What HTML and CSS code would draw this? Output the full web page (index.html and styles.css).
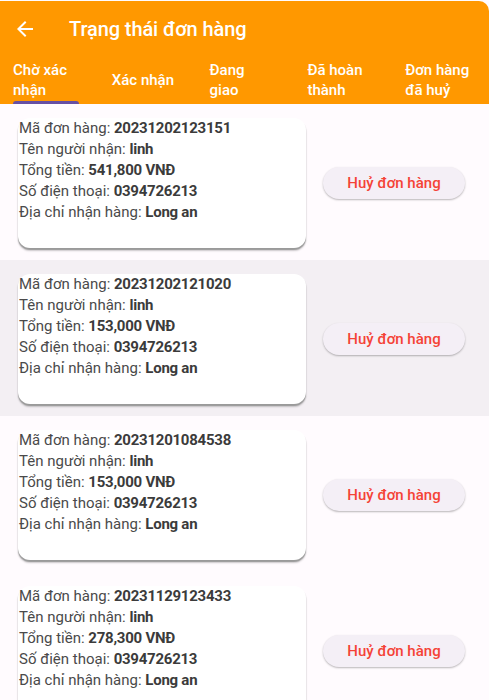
FILE: index.html
```html
<!DOCTYPE html>
<html lang="vi">
<head>
<meta charset="utf-8">
<title>Trạng thái đơn hàng</title>
<link rel="stylesheet" href="styles.css">
</head>
<body>
<header class="header">
  <div class="appbar">
    <span class="back">
      <svg width="24" height="24" viewBox="0 0 24 24"><path fill="#fff" d="M20 11H7.830l5.590-5.590L12 4l-8 8 8 8 1.410-1.410L7.830 13H20v-2z"/></svg>
    </span>
    <h1 class="title">Trạng thái đơn hàng</h1>
  </div>
  <nav class="tabs">
    <div class="tab active"><span class="label">Chờ xác<br>nhận</span></div>
    <div class="tab"><span class="label">Xác nhận</span></div>
    <div class="tab"><span class="label">Đang<br>giao</span></div>
    <div class="tab"><span class="label">Đã hoàn<br>thành</span></div>
    <div class="tab"><span class="label">Đơn hàng<br>đã huỷ</span></div>
  </nav>
</header>
<main class="list">
  <section class="order">
    <div class="card">
      <div class="line">Mã đơn hàng: <b>20231202123151</b></div>
      <div class="line">Tên người nhận: <b>linh</b></div>
      <div class="line">Tổng tiền: <b>541,800 VNĐ</b></div>
      <div class="line">Số điện thoại: <b>0394726213</b></div>
      <div class="line">Địa chỉ nhận hàng: <b>Long an</b></div>
    </div>
    <button class="cancel">Huỷ đơn hàng</button>
  </section>
  <section class="order alt">
    <div class="card">
      <div class="line">Mã đơn hàng: <b>20231202121020</b></div>
      <div class="line">Tên người nhận: <b>linh</b></div>
      <div class="line">Tổng tiền: <b>153,000 VNĐ</b></div>
      <div class="line">Số điện thoại: <b>0394726213</b></div>
      <div class="line">Địa chỉ nhận hàng: <b>Long an</b></div>
    </div>
    <button class="cancel">Huỷ đơn hàng</button>
  </section>
  <section class="order">
    <div class="card">
      <div class="line">Mã đơn hàng: <b>20231201084538</b></div>
      <div class="line">Tên người nhận: <b>linh</b></div>
      <div class="line">Tổng tiền: <b>153,000 VNĐ</b></div>
      <div class="line">Số điện thoại: <b>0394726213</b></div>
      <div class="line">Địa chỉ nhận hàng: <b>Long an</b></div>
    </div>
    <button class="cancel">Huỷ đơn hàng</button>
  </section>
  <section class="order">
    <div class="card">
      <div class="line">Mã đơn hàng: <b>20231129123433</b></div>
      <div class="line">Tên người nhận: <b>linh</b></div>
      <div class="line">Tổng tiền: <b>278,300 VNĐ</b></div>
      <div class="line">Số điện thoại: <b>0394726213</b></div>
      <div class="line">Địa chỉ nhận hàng: <b>Long an</b></div>
    </div>
    <button class="cancel">Huỷ đơn hàng</button>
  </section>
</main>
</body>
</html>
```
FILE: styles.css
```css
* { box-sizing: border-box; }
html, body {
  margin: 0;
  padding: 0;
  background: #FFFBFE;
  font-family: Roboto, "Noto Sans", sans-serif;
  overflow: hidden;
}
.header {
  background: #FF9800;
  color: #fff;
  border-top-right-radius: 10px;
  margin-top: 1px;
}
.appbar {
  height: 55px;
  display: flex;
  align-items: center;
  padding-left: 13px;
}
.back {
  width: 24px;
  height: 24px;
  display: flex;
}
.title {
  margin: 0 0 0 32px;
  font-size: 20px;
  font-weight: 500;
  letter-spacing: -0.1px;
}
.tabs {
  display: grid;
  grid-template-columns: repeat(5, 1fr);
  height: 48px;
}
.tab {
  position: relative;
  display: flex;
  align-items: center;
  padding-left: 14px;
}
.tab:first-child { padding-left: 13px; }
.label {
  font-size: 15px;
  line-height: 20px;
  font-weight: 500;
  color: #fff;
}
.tab.active::after {
  content: "";
  position: absolute;
  left: 13px;
  bottom: 0;
  width: 66px;
  height: 3px;
  background: #6750A4;
  border-radius: 3px 3px 0 0;
}
.order {
  display: flex;
  align-items: center;
  height: 156px;
  padding: 14px 0 12px 18px;
}
.order.alt { background: #F3EFF3; }
.card {
  width: 288px;
  height: 130px;
  background: #fff;
  border-radius: 12px;
  box-shadow: 0 2px 1px #9a9a9a, 0 3px 2px rgba(0,0,0,0.18);
  color: #4a4a4a;
  font-size: 15px;
  line-height: 21px;
  padding-left: 1px;
  align-self: flex-start;
}
.line b {
  font-weight: 700;
  color: #3b3b3b;
  letter-spacing: -0.25px;
}
.cancel {
  margin-left: 17px;
  width: 142px;
  height: 32px;
  border: none;
  border-radius: 16px;
  background: #F4EFF6;
  box-shadow: 0 1px 2px rgba(0,0,0,0.28);
  color: #F44336;
  font-family: Roboto, "Noto Sans", sans-serif;
  font-size: 15px;
  font-weight: 500;
  padding: 0;
}
```
